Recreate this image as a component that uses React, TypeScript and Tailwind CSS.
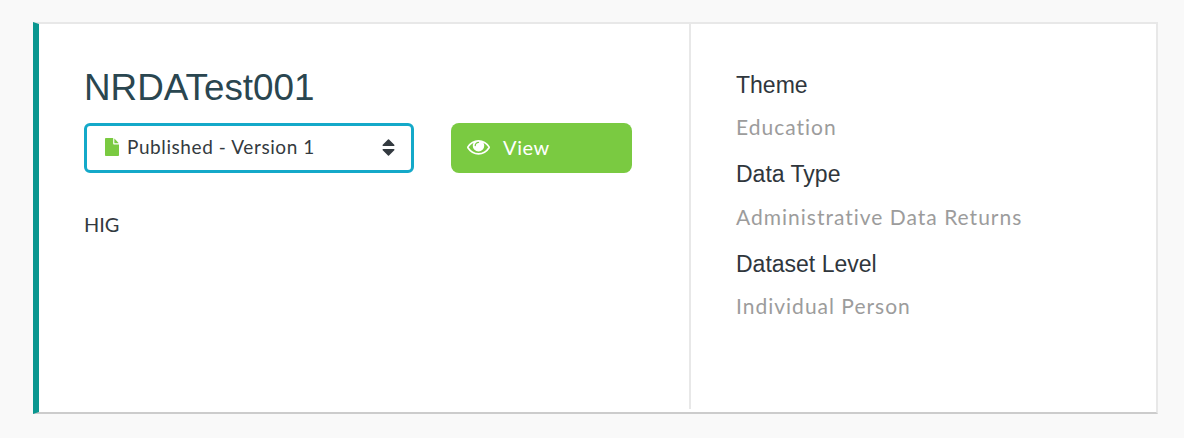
const sans = 'font-["Liberation_Sans",Arial,sans-serif]';
const lato = 'font-["Lato","Open_Sans",sans-serif]';

const details = [
    { label: 'Theme', value: 'Education' },
    { label: 'Data Type', value: 'Administrative Data Returns' },
    { label: 'Dataset Level', value: 'Individual Person' },
];

const FileIcon = () => (
    <svg width="14" height="18" viewBox="128 0 1536 1792" preserveAspectRatio="none" className="shrink-0">
        <path
            fill="#7aca41"
            d="M1152 512v-472q22 14 36 28l408 408q14 14 28 36h-472zm-128 32q0 40 28 68t68 28h544v1056q0 40-28 68t-68 28h-1344q-40 0-68-28t-28-68v-1600q0-40 28-68t68-28h800v544z"
        />
    </svg>
);

const EyeIcon = () => (
    <svg width="23" height="23" viewBox="0 0 1792 1792" className="shrink-0">
        <path
            fill="#fff"
            d="M1664 960q-152-236-381-353 61 104 61 225 0 185-131.500 316.500t-316.500 131.500-316.500-131.500-131.500-316.500q0-121 61-225-229 117-381 353 133 205 333.500 326.500t434.500 121.500 434.500-121.500 333.500-326.500zm-720-384q0-20-14-34t-34-14q-125 0-214.500 89.500t-89.500 214.500q0 20 14 34t34 14 34-14 14-34q0-86 61-147t147-61q20 0 34-14t14-34zm848 384q0 34-20 69-140 230-376.500 368.500t-499.500 138.500-499.500-139-376.500-368q-20-35-20-69t20-69q140-229 376.500-368t499.500-139 499.500 139 376.500 368q20 35 20 69z"
        />
    </svg>
);

const SortIcon = () => (
    <svg width="21" height="21" viewBox="0 0 1792 1792" className="shrink-0">
        <path
            fill="#333a40"
            d="M1408 1088q0 26-19 45l-448 448q-19 19-45 19t-45-19l-448-448q-19-19-19-45t19-45 45-19h896q26 0 45 19t19 45zm0-384q0 26-19 45t-45 19h-896q-26 0-45-19t-19-45 19-45l448-448q19-19 45-19t45 19l448 448q19 19 19 45z"
        />
    </svg>
);

export default function App() {
    return (
        <div className={`min-h-[438px] bg-[#f9f9f9] pl-[33px] pt-[22px] ${sans}`}>
            <div className="flex h-[392px] w-[1125px] border-t-2 border-r-2 border-b-2 border-l-[6px] border-t-[#e8e8e8] border-r-[#e8e8e8] border-b-[#cccccc] border-l-[#0a9790] bg-white">
                <div className="w-[650px] pl-[45px] pt-[43px]">
                    <h1 className="text-[36.8px] leading-[41px] font-normal text-[#2a4650]">NRDATest001</h1>
                    <div className="mt-[15px] flex gap-[37px]">
                        <div className={`flex h-[50px] w-[330px] items-center rounded-[6px] border-[3px] border-[#14a9c9] pb-[2px] pl-[18px] pr-[12px] text-[19px] text-[#333a40] ${lato}`}>
                            <FileIcon />
                            <span className="ml-[8px] flex-1 tracking-[0.59px]">Published - Version 1</span>
                            <SortIcon />
                        </div>
                        <div className={`flex h-[50px] w-[181px] items-center rounded-[8px] bg-[#7aca41] pb-[3px] pl-[16px] text-[20px] text-white ${lato}`}>
                            <EyeIcon />
                            <span className="ml-[13px] tracking-[0.6px]">View</span>
                        </div>
                    </div>
                    <p className={`mt-[38px] text-[20px] leading-[26px] text-[#333a40] ${lato}`}>HIG</p>
                </div>
                <div className="mb-[3px] w-[2px] bg-[#e8e8e8]" />
                <div className="flex-1 pl-[45px] pt-[45.9px]">
                    {details.map((item) => (
                        <div key={item.label} className="mb-[20.3px]">
                            <div className="text-[23px] leading-[30px] text-[#2f363c]">{item.label}</div>
                            <div className={`mt-[15.2px] text-[21px] leading-[24px] tracking-[1px] text-[#9c9c9c] ${lato}`}>{item.value}</div>
                        </div>
                    ))}
                </div>
            </div>
        </div>
    );
}
